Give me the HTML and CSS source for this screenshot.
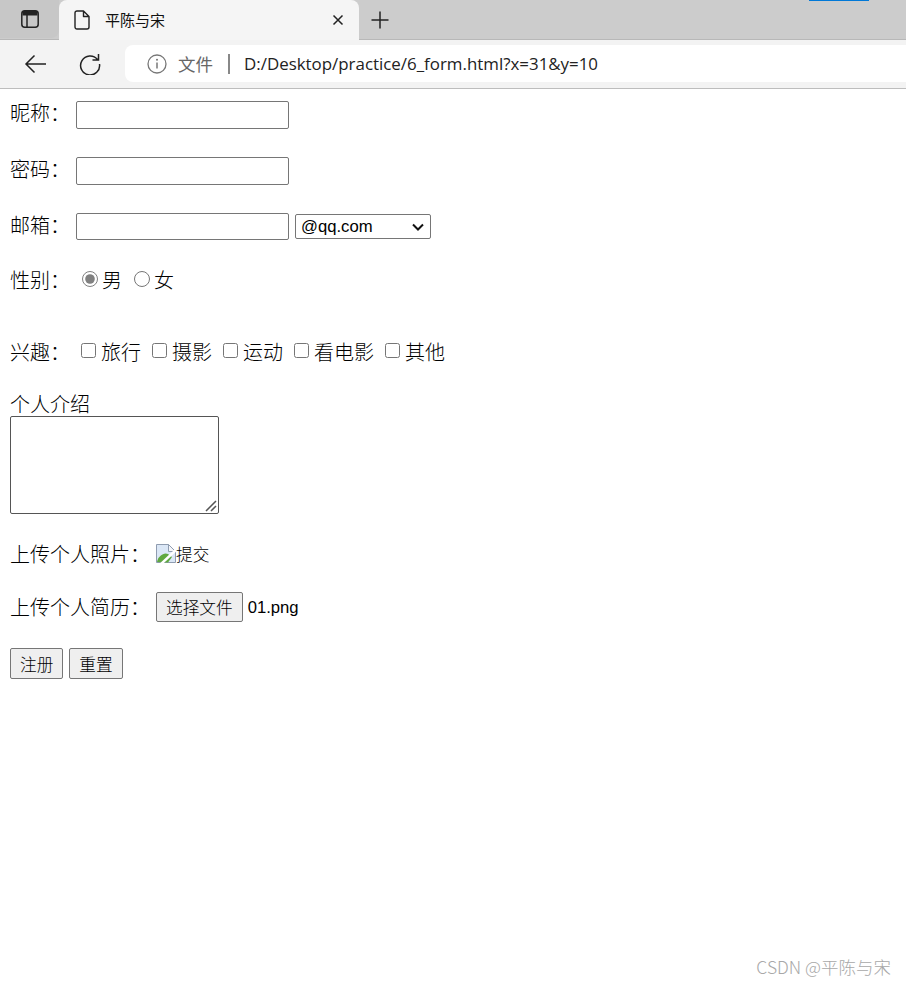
FILE: index.html
```html
<!DOCTYPE html>
<html lang="zh-CN">
<head>
<meta charset="utf-8">
<title>平陈与宋</title>
<link rel="stylesheet" href="styles.css">
</head>
<body>
<header class="chrome">
  <div class="strip">
    <div class="side-tab">
      <svg class="ico" width="18" height="18" viewBox="0 0 18 18"><rect x="0.800" y="0.800" width="16.400" height="16.400" rx="3" fill="none" stroke="#222" stroke-width="1.500"/><path d="M1.500 1h15v4.500h-15z" fill="#222"/><path d="M6 5v12" stroke="#222" stroke-width="1.500"/></svg>
    </div>
    <div class="tab">
      <svg class="ico" width="16" height="20" viewBox="0 0 16 20"><path d="M3 1h6.500L15 6.500V17a2 2 0 0 1-2 2H3a2 2 0 0 1-2-2V3a2 2 0 0 1 2-2z M9.500 1v5.500H15" fill="none" stroke="#222" stroke-width="1.400" stroke-linejoin="round"/></svg>
      <span class="tab-title">平陈与宋</span>
      <svg class="ico tab-close" width="12" height="12" viewBox="0 0 12 12"><path d="M1.500 1.500l9 9M10.500 1.500l-9 9" stroke="#222" stroke-width="1.500"/></svg>
    </div>
    <svg class="ico new-tab" width="18" height="18" viewBox="0 0 18 18"><path d="M9 0.500v17M0.500 9h17" stroke="#222" stroke-width="1.500"/></svg>
    <div class="progress"></div>
  </div>
  <div class="toolbar">
    <svg class="ico back" width="22" height="20" viewBox="0 0 22 20"><path d="M22 10H2M10.500 1.500L2 10l8.500 8.500" fill="none" stroke="#222" stroke-width="1.500"/></svg>
    <svg class="ico reload" width="22" height="22" viewBox="0 0 22 22"><path d="M18.500 6.500A9.500 9.500 0 1 0 20.500 11M19.500 1v6h-6" fill="none" stroke="#222" stroke-width="1.500"/></svg>
    <div class="address">
      <svg class="ico info" width="20" height="20" viewBox="0 0 20 20"><circle cx="10" cy="10" r="9" fill="none" stroke="#777" stroke-width="1.300"/><path d="M10 8.500v6" stroke="#777" stroke-width="1.500"/><circle cx="10" cy="5.800" r="1" fill="#777"/></svg>
      <span class="scheme">文件</span>
      <span class="sep"></span>
      <span class="url">D:/Desktop/practice/6_form.html?x=31&amp;y=10</span>
    </div>
  </div>
</header>

<form class="page">
  <div class="row">
    <label class="label top">昵称：</label>
    <input class="text" type="text">
  </div>
  <div class="row">
    <label class="label top">密码：</label>
    <input class="text" type="password">
  </div>
  <div class="row mail-row">
    <label class="label top">邮箱：</label>
    <input class="text short" type="text">
    <select class="mail"><option>@qq.com</option></select>
  </div>
  <div class="row">
    <label class="label">性别：</label>
    <span class="opts">
      <input class="radio" type="radio" name="sex" checked><span class="opt">男</span>
      <input class="radio" type="radio" name="sex"><span class="opt">女</span>
    </span>
  </div>
  <div class="row hobby">
    <label class="label">兴趣：</label>
    <span class="opts">
      <input class="check" type="checkbox"><span class="opt">旅行</span>
      <input class="check" type="checkbox"><span class="opt">摄影</span>
      <input class="check" type="checkbox"><span class="opt">运动</span>
      <input class="check" type="checkbox"><span class="opt">看电影</span>
      <input class="check" type="checkbox"><span class="opt">其他</span>
    </span>
  </div>
  <div class="about">
    <div class="about-title">个人介绍</div>
    <textarea class="intro"></textarea>
  </div>
  <div class="row upload">
    <label class="label wide">上传个人照片：</label>
    <span class="broken">
      <svg class="broken-ico" width="20" height="20" viewBox="0 0 20 20"><path d="M0.500 1.500h12l7 7v11h-19z" fill="#dbe7f6" stroke="#8f9cb0"/><path d="M12.500 1.500v7h7z" fill="#f4f6fa" stroke="#8f9cb0"/><path d="M1 19c1-6 7-10 11-8l4 3-4 5.500z" fill="#5fa83f"/><path d="M5 21L20 7" stroke="#fff" stroke-width="2.500"/></svg><span class="alt">提交</span>
    </span>
  </div>
  <div class="row resume">
    <label class="label wide">上传个人简历：</label>
    <button class="btn file" type="button">选择文件</button>
    <span class="file-name">01.png</span>
  </div>
  <div class="row actions">
    <button class="btn" type="submit">注册</button>
    <button class="btn" type="reset">重置</button>
  </div>
</form>
<div class="mark">CSDN @平陈与宋</div>
</body>
</html>
```
FILE: styles.css
```css
* { box-sizing: border-box; }
html, body { margin: 0; height: 985px; overflow: hidden; background: #fff; }
body {
  position: relative;
  font-family: "Noto Sans CJK SC", "Liberation Sans", sans-serif;
  font-size: 20px;
  font-weight: 300;
  color: #000;
}
.ico { display: block; flex: none; }

/* browser chrome */
.chrome { height: 89px; border-bottom: 1px solid #bdbdbd; background: #f3f3f3; }
.strip {
  position: relative;
  display: flex;
  align-items: center;
  height: 40px;
  background: #cccccc;
  border-bottom: 1px solid #b8b8b8;
}
.side-tab {
  display: flex;
  align-items: center;
  justify-content: center;
  align-self: flex-start;
  width: 59px;
  height: 38px;
  background: #c7c7c7;
  border-radius: 0 0 8px 0;
}
.tab {
  display: flex;
  align-items: center;
  width: 300px;
  height: 40px;
  padding: 0 15px;
  background: #f5f5f5;
  border-radius: 8px 8px 0 0;
}
.tab-title { flex: 1; margin-left: 15px; font-size: 15px; font-weight: 400; color: #111; }
.new-tab { margin-left: 12px; }
.progress { position: absolute; top: 0; left: 809px; width: 60px; height: 1px; background: #0078d7; }
.toolbar { display: flex; align-items: center; height: 48px; }
.back { margin-left: 24px; }
.reload { margin-left: 33px; }
.address {
  display: flex;
  align-items: center;
  flex: 1;
  height: 37px;
  margin-top: -1px;
  margin-left: 24px;
  padding-left: 22px;
  background: #fff;
  border-radius: 8px 0 0 8px;
}
.scheme { margin-left: 11px; font-size: 17.500px; font-weight: 400; color: #666; }
.sep { width: 2px; height: 20px; margin-left: 15px; background: #888; }
.url { margin-left: 14px; font-family: "Open Sans", sans-serif; font-size: 16.900px; font-weight: 400; color: #222; }

/* form */
.page { padding: 12px 0 0 10px; }
.row { display: flex; align-items: center; min-height: 28px; margin-bottom: 28px; }
.label { flex: none; width: 66px; line-height: 28px; }
.label.top { align-self: flex-start; line-height: 24px; }
.label.wide { width: 146px; }
.text {
  width: 213px;
  height: 28px;
  margin: 0;
  padding: 1px 2px;
  background: #fff;
  border: 1px solid #767676;
  border-radius: 2px;
}
.text.short { align-self: flex-start; height: 27px; }
.mail-row { margin-bottom: 25px; }
.mail {
  appearance: none;
  align-self: flex-start;
  width: 136px;
  height: 25px;
  margin: 1px 0 0 6px;
  padding: 0 0 0 5px;
  font-family: "Liberation Sans", sans-serif;
  font-size: 16.670px;
  color: #000;
  background: #fff url("data:image/svg+xml,%3Csvg xmlns='http://www.w3.org/2000/svg' width='12' height='8' viewBox='0 0 12 8'%3E%3Cpath d='M1 1.500l5 5 5-5' fill='none' stroke='%23111' stroke-width='2'/%3E%3C/svg%3E") no-repeat right 6px center;
  border: 1px solid #767676;
  border-radius: 2px;
}
.opts { display: flex; align-items: center; padding-left: 5px; }
.radio { flex: none; width: 16px; height: 16px; margin: -3px 4px 0 1px; accent-color: #808080; }
.check { flex: none; width: 15px; height: 15px; margin: -3px 5px 0 0; accent-color: #808080; }
.opt { margin-right: 11px; line-height: 28px; }
.hobby { margin-top: 44px; margin-bottom: 26px; }
.about { margin-bottom: 26px; }
.about-title { height: 24px; line-height: 24px; }
.intro {
  display: block;
  width: 209px;
  height: 98px;
  margin: 0;
  background: #fff;
  border: 1px solid #555;
  border-radius: 2px;
}
.intro::-webkit-resizer {
  background: url("data:image/svg+xml,%3Csvg xmlns='http://www.w3.org/2000/svg' width='15' height='15' viewBox='0 0 15 15'%3E%3Cpath d='M3 13L13 3M8 13l5-5' fill='none' stroke='%23555' stroke-width='1.500'/%3E%3C/svg%3E") no-repeat center;
}
.upload { margin-bottom: 24px; }
.broken { display: flex; align-items: center; }
.broken-ico { flex: none; margin-top: -2px; }
.alt { font-size: 16.670px; line-height: 28px; }
.btn {
  height: 31px;
  margin: 0 6px 0 0;
  padding: 0 9px;
  font-family: "Noto Sans CJK SC", "Liberation Sans", sans-serif;
  font-size: 16.670px;
  font-weight: 300;
  color: #000;
  background: #efefef;
  border: 1px solid #767676;
  border-radius: 2px;
}
.file { height: 30px; margin-right: 5px; }
.file-name { margin-top: 1px; font-family: "Liberation Sans", sans-serif; font-size: 16.670px; font-weight: 400; color: #000; }
.resume { margin-bottom: 26px; }

.mark {
  position: absolute;
  right: 15px;
  bottom: 6px;
  font-family: "Noto Sans CJK SC", "Liberation Sans", sans-serif;
  font-size: 17.500px;
  color: #a8a8a8;
}
```
